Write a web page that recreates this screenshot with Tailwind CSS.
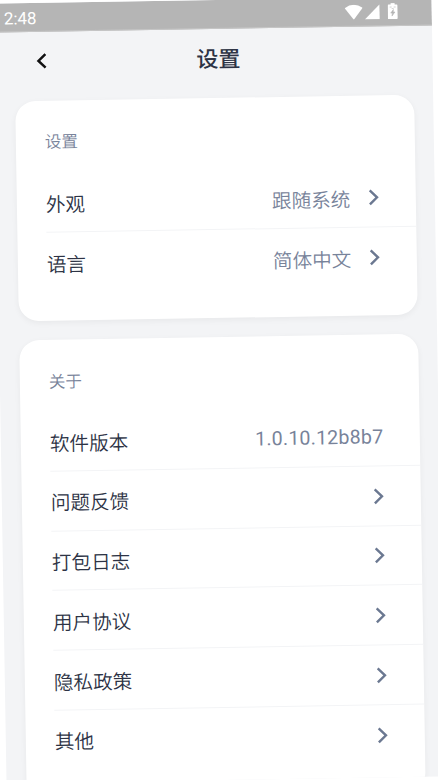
<!DOCTYPE html>
<html lang="zh-CN">
<head>
<meta charset="utf-8">
<title>设置</title>
<script src="https://cdn.jsdelivr.net/npm/@tailwindcss/browser@4"></script>
</head>
<body class="bg-white overflow-hidden">
<svg class="hidden">
  <symbol id="next" viewBox="0 0 12 18"><path d="M2 2 L9.2 9 L2 16" fill="none" stroke="#6b7891" stroke-width="2.4"/></symbol>
</svg>
<div class="w-[438px] h-[780px] overflow-hidden bg-[#f3f4f6] rotate-[-0.955deg] font-[Roboto,'Noto_Sans_CJK_SC',sans-serif] text-[#2d3345] flex flex-col">
  <header class="h-[29px] shrink-0 bg-[#b5b5b5] border-b border-[#c6c6c6] flex items-center justify-between pl-[10px] pr-[34.500px] text-white">
    <span class="text-[17px] leading-none pt-[2px]">2:48</span>
    <div class="flex items-center">
      <svg class="w-[18px] h-[15px]" viewBox="0 0 18 15"><path d="M0 3.3 Q9 -3.3 18 3.3 L9 15Z" fill="#fff"/></svg>
      <svg class="w-[15px] h-[15px] ml-[2px]" viewBox="0 0 15 15"><path d="M15 0V15H0Z" fill="#fff"/></svg>
      <svg class="w-[10px] h-[16px] ml-[8px]" viewBox="0 0 10 16"><path d="M3 0h4v1.5h2q1 0 1 1V15q0 1-1 1H1q-1 0-1-1V2.500q0-1 1-1h2Z" fill="#fff"/><path d="M2 4h2M6 4h2M4 5.500h2M5.700 6.500L3 10h1.700l-.5 3L7.200 9H5.400Z" stroke="#b5b5b5" stroke-width=".6" fill="#b5b5b5"/></svg>
    </div>
  </header>
  <nav class="h-[69px] shrink-0 grid grid-cols-3 px-[40px]">
    <svg class="w-[14px] h-[18px] mt-[20px]" viewBox="0 0 14 18"><path d="M11 2.300 L4 9 L11 15.700" fill="none" stroke="#111" stroke-width="2.5"/></svg>
    <h1 class="text-[22px] leading-[62px] font-medium text-center pl-[10px] whitespace-nowrap">设置</h1>
  </nav>
  <main class="flex flex-col gap-[19.500px] px-[19.500px] shrink-0">
    <section class="bg-white rounded-[20px] shadow-[0_2px_6px_rgba(0,0,0,0.05)] pl-[29.500px] pb-[28px]">
      <h2 class="h-[72px] pt-[29px] text-[16.500px] leading-[26px] text-[#78839a] font-[350]">设置</h2>
      <div class="h-[59.750px] border-b border-[#f3f4f6] flex items-center text-[19.600px] pr-[36px] font-[350]">
        <span class="pt-[6px]">外观</span><span class="pt-[6px] ml-auto text-[#78839a]">跟随系统</span><svg class="w-[12px] h-[18px] ml-[17px] mt-[2px]"><use href="#next"/></svg>
      </div>
      <div class="h-[59.750px] flex items-center text-[19.600px] pr-[36px] font-[350]">
        <span class="pt-[6px]">语言</span><span class="pt-[6px] ml-auto text-[#78839a]">简体中文</span><svg class="w-[12px] h-[18px] ml-[17px] mt-px"><use href="#next"/></svg>
      </div>
    </section>
    <section class="bg-white rounded-[20px] shadow-[0_2px_6px_rgba(0,0,0,0.05)] pl-[29.500px] pb-[28px]">
      <h2 class="h-[72px] pt-[29.500px] text-[16.500px] leading-[26px] text-[#78839a] font-[350]">关于</h2>
      <div class="h-[59.750px] border-b border-[#f3f4f6] flex items-center text-[19.600px] pr-[36px]">
        <span class="pt-[6px] font-[350]">软件版本</span><span class="ml-auto text-[#78839a] tracking-[0.2px] pt-[2px]">1.0.10.12b8b7</span>
      </div>
      <div class="h-[59.750px] border-b border-[#f3f4f6] flex items-center justify-between text-[19.600px] pr-[36px] font-[350]">
        <span class="pt-[5px]">问题反馈</span><svg class="w-[12px] h-[18px] mt-px"><use href="#next"/></svg>
      </div>
      <div class="h-[59.750px] border-b border-[#f3f4f6] flex items-center justify-between text-[19.600px] pr-[36px] font-[350]">
        <span class="pt-[5px]">打包日志</span><svg class="w-[12px] h-[18px] mt-px"><use href="#next"/></svg>
      </div>
      <div class="h-[59.750px] border-b border-[#f3f4f6] flex items-center justify-between text-[19.600px] pr-[36px] font-[350]">
        <span class="pt-[6px]">用户协议</span><svg class="w-[12px] h-[18px] mt-px"><use href="#next"/></svg>
      </div>
      <div class="h-[59.750px] border-b border-[#f3f4f6] flex items-center justify-between text-[19.600px] pr-[36px] font-[350]">
        <span class="pt-[6px]">隐私政策</span><svg class="w-[12px] h-[18px] mt-px"><use href="#next"/></svg>
      </div>
      <div class="h-[59.750px] flex items-center justify-between text-[19.600px] pr-[36px] font-[350]">
        <span class="pt-[5px]">其他</span><svg class="w-[12px] h-[18px]"><use href="#next"/></svg>
      </div>
    </section>
  </main>
</div>
</body>
</html>
